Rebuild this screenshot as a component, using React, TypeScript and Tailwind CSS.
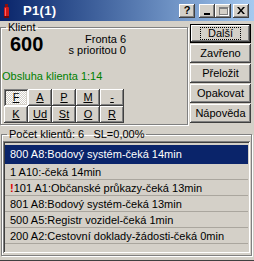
const raised =
  'shadow-[inset_-1px_-1px_#404040,inset_1px_1px_#ffffff,inset_-2px_-2px_#808080,inset_2px_2px_#d4d0c8]';
const sunken =
  'shadow-[inset_1px_1px_#808080,inset_-1px_-1px_#ffffff,inset_2px_2px_#404040,inset_-2px_-2px_#d4d0c8]';
const etched = 'border border-[#808080] shadow-[inset_1px_1px_#ffffff,1px_1px_#ffffff]';

const actions = ['Další', 'Zavřeno', 'Přeložit', 'Opakovat', 'Nápověda'];
const letters = ['F', 'A', 'P', 'M', '-', 'K', 'Ud', 'St', 'O', 'R'];
const queue = [
  { text: '800 A8:Bodový systém-čeká 14min', selected: true },
  { text: '1 A10:-čeká 14min' },
  { text: '101 A1:Občanské průkazy-čeká 13min', priority: true },
  { text: '801 A8:Bodový systém-čeká 13min' },
  { text: '500 A5:Registr vozidel-čeká 1min' },
  { text: '200 A2:Cestovní doklady-žádosti-čeká 0min' },
];

function CaptionButton({ children }: { children: React.ReactNode }) {
  return (
    <div className={`w-[16px] h-[14px] bg-[#d4d0c8] flex items-center justify-center ${raised}`}>
      {children}
    </div>
  );
}

export default function App() {
  return (
    <div className="w-[254px] h-[261px] bg-[#d4d0c8] flex flex-col overflow-hidden font-['Liberation_Sans',Arial,sans-serif] text-[11px] text-black">
      {/* title bar */}
      <div className="h-[21px] shrink-0 flex items-center bg-linear-to-r from-[#0a246a] to-[#a6caf0] pl-[3px] pr-[5px]">
        <svg width="8" height="15" viewBox="0 0 8 15" className="mt-[1px]">
          <rect x="2" y="0" width="3" height="3" fill="#8a1010" />
          <rect x="1" y="3" width="5" height="11" rx="1" fill="#d01818" />
          <rect x="2" y="4" width="1" height="9" fill="#ff6060" />
          <rect x="1" y="12" width="5" height="2" fill="#700808" />
        </svg>
        <span className="ml-[12px] text-white font-bold text-[13px] leading-none tracking-[0.3px]">P1(1)</span>
        <div className="ml-auto flex items-center">
          <CaptionButton>
            <span className="font-bold text-[11px] leading-none">?</span>
          </CaptionButton>
          <div className="ml-[4px] flex">
            <CaptionButton>
              <div className="w-[6px] h-[2px] bg-black mt-[6px] -ml-[1px]" />
            </CaptionButton>
            <CaptionButton>
              <div className="w-[9px] h-[8px] border border-[#808080] border-t-2 shadow-[1px_1px_#ffffff]" />
            </CaptionButton>
          </div>
          <div className="ml-[2px]">
            <CaptionButton>
              <svg width="8" height="7" viewBox="0 0 8 7">
                <path d="M0 0h2l2 2.5L6 0h2L5 3.5 8 7H6L4 4.5 2 7H0l3-3.5z" fill="#000" />
              </svg>
            </CaptionButton>
          </div>
        </div>
      </div>

      {/* upper part */}
      <div className="flex items-start">
        <fieldset className={`w-[188px] h-[104px] ${etched}`}>
          <legend className="ml-[5px] px-[2px] leading-[13px]">Klient</legend>
          <div className="flex w-[125px] pl-[9px] justify-between">
            <span className="text-[20px] font-bold leading-[20px]">600</span>
            <div className="text-right leading-[11px]">
              <div>Fronta 6</div>
              <div>s prioritou 0</div>
            </div>
          </div>
          <div className="mt-[14px] ml-[1px] leading-[13px] text-[#008000]">Obsluha klienta 1:14</div>
          <div className="mt-[6px] ml-[3px] grid grid-cols-[repeat(5,24px)] grid-rows-[17px_17px]">
            {letters.map((l, i) => (
              <div
                key={l}
                className={`flex items-center justify-center ${
                  i === 0
                    ? `bg-[repeating-conic-gradient(#ffffff_0%_25%,#d4d0c8_0%_50%)] bg-size-[2px_2px] ${sunken}`
                    : raised
                }`}
              >
                <span className="underline underline-offset-[1px] leading-none">{l}</span>
              </div>
            ))}
          </div>
        </fieldset>

        <div className="ml-[2px] mt-[3px] flex flex-col gap-[1px]">
          {actions.map((a, i) => (
            <div
              key={a}
              className={`w-[61px] h-[19px] flex items-center justify-center ${
                i === 0
                  ? 'border border-black shadow-[inset_-1px_-1px_#404040,inset_1px_1px_#ffffff,inset_-2px_-2px_#808080]'
                  : raised
              }`}
            >
              {i === 0 ? (
                <span className="px-[7px] leading-[11px] outline outline-dotted outline-1 outline-black">{a}</span>
              ) : (
                <span>{a}</span>
              )}
            </div>
          ))}
        </div>
      </div>

      {/* queue */}
      <fieldset className={`mt-[3px] ml-[1px] w-[251px] px-[1px] pb-[2px] ${etched}`}>
        <legend className="ml-[4px] px-[2px] leading-[13px]">Počet klientů: 6&nbsp;&nbsp;&nbsp;SL=0,00%</legend>
        <div className={`h-[112px] pt-[4px] px-[2px] bg-[#d4d0c8] ${sunken}`}>
          {queue.map((q) => (
            <div
              key={q.text}
              className={`pl-[5px] whitespace-nowrap ${
                q.selected
                  ? 'h-[19px] leading-[18px] bg-[#0a246a] text-white'
                  : 'h-[16px] leading-[16px] border-b border-[#aaa69e]'
              }`}
            >
              {q.priority && <span className="text-[#e00000] font-bold">!</span>}
              {q.text}
            </div>
          ))}
        </div>
      </fieldset>
      <div className="mt-auto h-[2px] border-b border-[#404040]" />
    </div>
  );
}
